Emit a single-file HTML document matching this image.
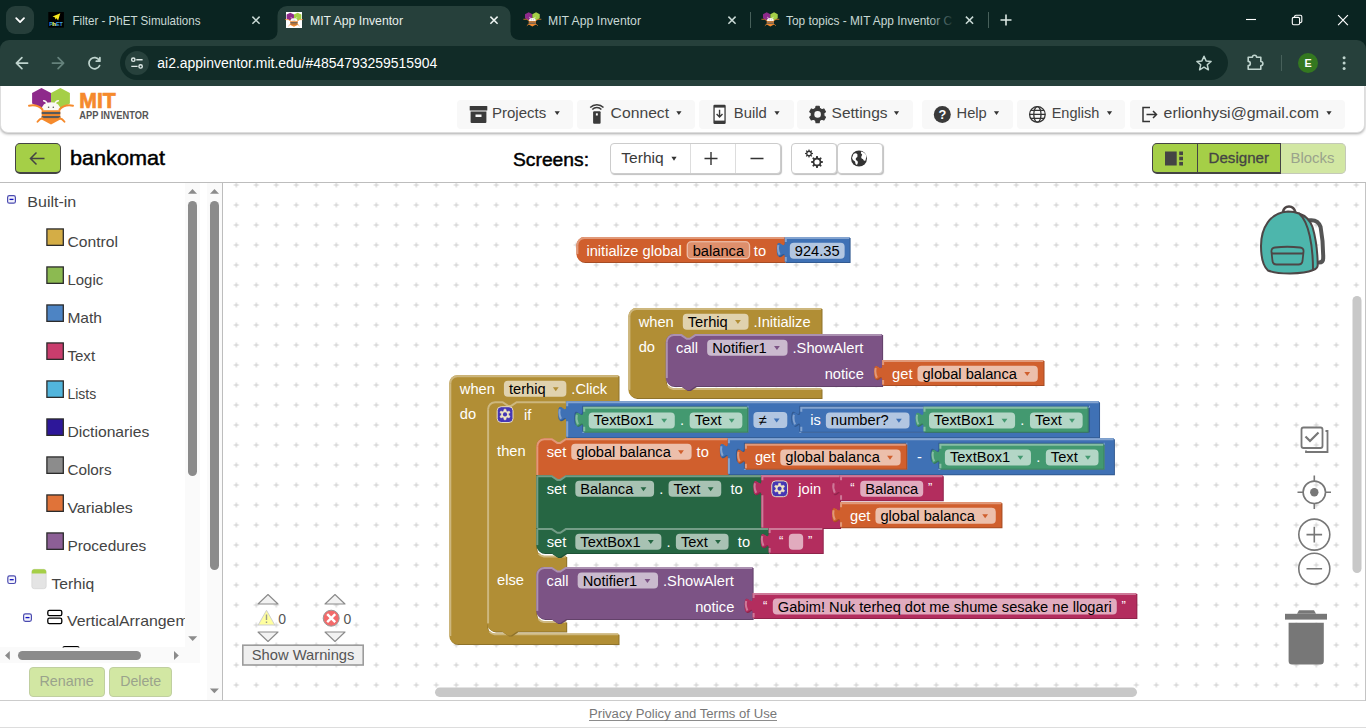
<!DOCTYPE html>
<html><head><meta charset="utf-8"><title>MIT App Inventor</title>
<style>
html,body{margin:0;padding:0;}
body{width:1366px;height:728px;overflow:hidden;position:relative;background:#fff;font-family:"Liberation Sans",sans-serif;}
#boxes div{position:absolute;}
svg{position:absolute;left:0;top:0;}
svg text{font-family:"Liberation Sans",sans-serif;white-space:pre;}
#ws text{font-size:14.667px;}
</style></head><body>
<div id="boxes">
<div style="left:0px;top:0px;width:1366px;height:60px;background:#0a2421"></div>
<div style="left:0px;top:40px;width:1366px;height:46.5px;background:#26403b;border-radius:9px 9px 0 0"></div>
<div style="left:6px;top:6px;width:28px;height:28px;background:#263e3a;border-radius:9px"></div>
<div style="left:750px;top:12px;width:1px;height:16px;background:#47605a"></div>
<div style="left:988px;top:12px;width:1px;height:16px;background:#47605a"></div>
<div style="left:120px;top:46px;width:1108px;height:33.8px;background:#112b27;border-radius:17px"></div>
<div style="left:124.8px;top:51px;width:24.2px;height:24.2px;background:#27413c;border-radius:13px"></div>
<div style="left:1280.5px;top:55px;width:1px;height:16px;background:#47605a"></div>
<div style="left:1298.4px;top:53.4px;width:19.4px;height:19.4px;background:#347820;border-radius:10px"></div>
<div style="left:0px;top:86px;width:1366px;height:642px;background:#fff"></div>
<div style="left:0px;top:80px;width:1365.3px;height:53.3px;background:#fff;border-radius:0 0 8px 8px;box-shadow:0 1px 3px rgba(0,0,0,.35);border:1px solid #ddd;box-sizing:border-box;clip-path:inset(6.5px -5px -6px -5px)"></div>
<div style="left:457px;top:100px;width:116px;height:28.7px;background:#f8f8f8;border-radius:4px"></div>
<div style="left:577px;top:100px;width:118px;height:28.7px;background:#f8f8f8;border-radius:4px"></div>
<div style="left:698.5px;top:100px;width:95px;height:28.7px;background:#f8f8f8;border-radius:4px"></div>
<div style="left:797px;top:100px;width:116px;height:28.7px;background:#f8f8f8;border-radius:4px"></div>
<div style="left:922px;top:100px;width:91px;height:28.7px;background:#f8f8f8;border-radius:4px"></div>
<div style="left:1017px;top:100px;width:108px;height:28.7px;background:#f8f8f8;border-radius:4px"></div>
<div style="left:1130px;top:100px;width:215px;height:28.7px;background:#f8f8f8;border-radius:4px"></div>
<div style="left:15px;top:143px;width:46px;height:31px;background:#a5cf47;border:1px solid #444;border-bottom-width:2px;border-right-width:1.5px;border-radius:5px;box-sizing:border-box"></div>
<div style="left:610px;top:143px;width:171px;height:31px;background:#fff;border:1px solid #ccc;border-radius:4px;box-sizing:border-box;box-shadow:1px 1px 1px rgba(0,0,0,.25)"></div>
<div style="left:690px;top:144px;width:1px;height:29px;background:#ddd"></div>
<div style="left:735px;top:144px;width:1px;height:29px;background:#ddd"></div>
<div style="left:791px;top:143px;width:46px;height:31px;background:#fff;border:1px solid #ccc;border-radius:4px;box-sizing:border-box;box-shadow:1px 1px 1px rgba(0,0,0,.25)"></div>
<div style="left:837px;top:143px;width:46px;height:31px;background:#fff;border:1px solid #ccc;border-radius:4px;box-sizing:border-box;box-shadow:1px 1px 1px rgba(0,0,0,.25)"></div>
<div style="left:1152px;top:143px;width:129px;height:31px;background:#a5cf47;border:1px solid #444;border-bottom-width:2px;border-radius:5px 0 0 5px;box-sizing:border-box"></div>
<div style="left:1197px;top:143px;width:1px;height:31px;background:#444"></div>
<div style="left:1280px;top:143px;width:66px;height:31px;background:#d2e7a3;border:1px solid #c4c9b8;border-left:none;border-radius:0 5px 5px 0;box-sizing:border-box"></div>
<div style="left:1280px;top:143px;width:1px;height:31px;background:#444"></div>
<div style="left:0px;top:182px;width:1366px;height:1px;background:#bdbdbd"></div>
<div style="left:222px;top:183px;width:1px;height:518px;background:#bdbdbd"></div>
<div style="left:0px;top:700px;width:1366px;height:1px;background:#ccc"></div>
<div style="left:1364.6px;top:183px;width:1px;height:518px;background:#c4c4c4"></div>
<div style="left:0px;top:727px;width:1366px;height:1px;background:#ddd"></div>
<div style="left:185px;top:183px;width:15px;height:464px;background:#fafafa"></div>
<div style="left:207px;top:183px;width:15px;height:517px;background:#fafafa"></div>
<div style="left:0px;top:647px;width:200px;height:16px;background:#fafafa"></div>
<div style="left:188px;top:201px;width:9px;height:275px;background:#8b8b8b;border-radius:4.5px"></div>
<div style="left:210px;top:201px;width:9px;height:368.5px;background:#8b8b8b;border-radius:4.5px"></div>
<div style="left:18px;top:651px;width:123px;height:9px;background:#8b8b8b;border-radius:4.5px"></div>
<div style="left:28.5px;top:667px;width:76.5px;height:30px;background:#d2e7a3;border:1px solid #c0cfa0;border-radius:4px;box-sizing:border-box"></div>
<div style="left:109px;top:667px;width:63px;height:30px;background:#d2e7a3;border:1px solid #c0cfa0;border-radius:4px;box-sizing:border-box"></div>
<div style="left:589px;top:719.6px;width:188px;height:1px;background:#8c8c8c"></div>
</div>
<svg id="ws" width="1366" height="728" viewBox="0 0 1366 728">
<defs>
<pattern id="grid" x="6.3" y="-5" width="20" height="20" patternUnits="userSpaceOnUse"><path d="M7.5,10 h5 M10,7.500 v5" stroke="#ccc" stroke-width="1"/></pattern>
<clipPath id="wsclip"><rect x="223" y="183" width="1141" height="517"/></clipPath>
</defs>
<g clip-path="url(#wsclip)">
<rect x="223" y="183" width="1141" height="517" fill="url(#grid)"/>
<g id="blocks">
<path d="M 576.4,245.1 a 8,8 0 0,1 8,-8 H 784.8 v 5 c 0,10 -8,-8 -8,7.5 s 8,-2.5 8,7.5 V 262.1 H 584.4 a 8,8 0 0,1 -8,-8 z" fill="#a64c24" transform="translate(1,1)"/>
<path d="M 576.4,245.1 a 8,8 0 0,1 8,-8 H 784.8 v 5 c 0,10 -8,-8 -8,7.5 s 8,-2.5 8,7.5 V 262.1 H 584.4 a 8,8 0 0,1 -8,-8 z" fill="#D05F2D"/>
<path d="M 577.4,245.1 a 7,7 0 0,1 7,-7 H 784.3" fill="none" stroke="#e19979" stroke-width="2"/>
<path d="M 577.4,245.1 V 254.1" fill="none" stroke="#e19979" stroke-width="2"/>
<text x="586.4" y="255.75" fill="#fff">initialize global</text>
<rect x="687.22" y="241.7" width="62.34" height="17" rx="4" ry="4" fill="#fff" fill-opacity="0.3" stroke="#fff" stroke-opacity="0.5" stroke-width="1.3"/>
<text x="692.72" y="255.75" fill="#000">balanca</text>
<text x="753.86" y="255.75" fill="#fff">to</text>
<path d="M 784.8,237.1 H 849.6 V 262.1 H 784.8 V 257.1 c 0,-10 -8,8 -8,-7.5 s 8,2.5 8,-7.5 z" fill="#325a91" transform="translate(1,1)"/>
<path d="M 784.8,237.1 H 849.6 V 262.1 H 784.8 V 257.1 c 0,-10 -8,8 -8,-7.5 s 8,2.5 8,-7.5 z" fill="#3F71B5"/>
<path d="M 785.8,261.6 V 257.1 m -7.4,-12 q -1.2,4.8 1.2,9.6 M 785.8,242.1 V 238.1 H 849.1" fill="none" stroke="#84a4d0" stroke-width="2"/>
<rect x="789.8" y="242.7" width="54.83" height="16" rx="4" ry="4" fill="#fff" fill-opacity="0.6"/>
<text x="794.8" y="255.75" fill="#000">924.35</text>
<path d="M 628.4,316.1 a 8,8 0 0,1 8,-8 H 821.5 V 334.1 H 695.8 l -6,4 -3,0 -6,-4 h -7 a 8,8 0 0,0 -8,8 V 380.4 a 8,8 0 0,0 8,8 H 821.5 V 397.9 H 636.4 a 8,8 0 0,1 -8,-8 z" fill="#8e722a" transform="translate(1,1)"/>
<path d="M 628.4,316.1 a 8,8 0 0,1 8,-8 H 821.5 V 334.1 H 695.8 l -6,4 -3,0 -6,-4 h -7 a 8,8 0 0,0 -8,8 V 380.4 a 8,8 0 0,0 8,8 H 821.5 V 397.9 H 636.4 a 8,8 0 0,1 -8,-8 z" fill="#B18E35"/>
<path d="M 629.4,316.1 a 7,7 0 0,1 7,-7 H 821" fill="none" stroke="#cdb77e" stroke-width="2"/>
<path d="M 629.4,316.1 V 389.9" fill="none" stroke="#cdb77e" stroke-width="2"/>
<path d="M 668.1,386.1 a 7.5,7.5 0 0,0 5.2,2.8 H 821" fill="none" stroke="#cdb77e" stroke-width="2"/>
<text x="638.7" y="326.75" fill="#fff">when </text>
<rect x="682.81" y="313.7" width="65.72" height="16" rx="4" ry="4" fill="#fff" fill-opacity="0.6"/>
<text x="687.81" y="326.75" fill="#000">Terhiq</text>
<path d="M735.03,320.1 h5.8 l-2.9,4 z" fill="#B18E35"/>
<text x="753.53" y="326.75" fill="#fff">.Initialize</text>
<text x="638.7" y="352.35" fill="#fff">do</text>
<path d="M 665.8,342.1 a 8,8 0 0,1 8,-8 H 680.8 l 6,4 3,0 6,-4 H 882.11 V 365.1 c 0,10 -8,-8 -8,7.5 s 8,-2.5 8,7.5 V 386.1 H 695.8 l -6,4 -3,0 -6,-4 H 673.8 a 8,8 0 0,1 -8,-8 z" fill="#63426a" transform="translate(1,1)"/>
<path d="M 665.8,342.1 a 8,8 0 0,1 8,-8 H 680.8 l 6,4 3,0 6,-4 H 882.11 V 365.1 c 0,10 -8,-8 -8,7.5 s 8,-2.5 8,7.5 V 386.1 H 695.8 l -6,4 -3,0 -6,-4 H 673.8 a 8,8 0 0,1 -8,-8 z" fill="#7C5385"/>
<path d="M 666.8,342.1 a 7,7 0 0,1 7,-7 H 681.3 l 5.5,3.7 3,0 5.5,-3.7 H 881.61" fill="none" stroke="#ab91b1" stroke-width="2"/>
<path d="M 666.8,342.1 V 378.1" fill="none" stroke="#ab91b1" stroke-width="2"/>
<text x="676.1" y="352.75" fill="#fff">call </text>
<rect x="707.16" y="339.7" width="80.37" height="16" rx="4" ry="4" fill="#fff" fill-opacity="0.6"/>
<text x="712.16" y="352.75" fill="#000">Notifier1</text>
<path d="M774.04,346.1 h5.8 l-2.9,4 z" fill="#7C5385"/>
<text x="792.54" y="352.75" fill="#fff">.ShowAlert</text>
<text x="824.7" y="378.75" fill="#fff">notice</text>
<path d="M 882.11,360.1 H 1043.51 V 385.1 H 882.11 V 380.1 c 0,-10 -8,8 -8,-7.5 s 8,2.5 8,-7.5 z" fill="#a64c24" transform="translate(1,1)"/>
<path d="M 882.11,360.1 H 1043.51 V 385.1 H 882.11 V 380.1 c 0,-10 -8,8 -8,-7.5 s 8,2.5 8,-7.5 z" fill="#D05F2D"/>
<path d="M 883.11,384.6 V 380.1 m -7.4,-12 q -1.2,4.8 1.2,9.6 M 883.11,365.1 V 361.1 H 1043.01" fill="none" stroke="#e19979" stroke-width="2"/>
<text x="892.11" y="378.75" fill="#fff">get</text>
<rect x="917.48" y="365.7" width="120.33" height="16" rx="4" ry="4" fill="#fff" fill-opacity="0.6"/>
<text x="922.48" y="378.75" fill="#000">global balanca</text>
<path d="M1024.31,372.1 h5.8 l-2.9,4 z" fill="#D05F2D"/>
<path d="M 449.3,383.2 a 8,8 0 0,1 8,-8 H 618.5 V 401.2 H 517.1 l -6,4 -3,0 -6,-4 h -7 a 8,8 0 0,0 -8,8 V 625.8 a 8,8 0 0,0 8,8 H 618.5 V 644 H 457.3 a 8,8 0 0,1 -8,-8 z" fill="#8e722a" transform="translate(1,1)"/>
<path d="M 449.3,383.2 a 8,8 0 0,1 8,-8 H 618.5 V 401.2 H 517.1 l -6,4 -3,0 -6,-4 h -7 a 8,8 0 0,0 -8,8 V 625.8 a 8,8 0 0,0 8,8 H 618.5 V 644 H 457.3 a 8,8 0 0,1 -8,-8 z" fill="#B18E35"/>
<path d="M 450.3,383.2 a 7,7 0 0,1 7,-7 H 618" fill="none" stroke="#cdb77e" stroke-width="2"/>
<path d="M 450.3,383.2 V 636" fill="none" stroke="#cdb77e" stroke-width="2"/>
<path d="M 489.4,631.5 a 7.5,7.5 0 0,0 5.2,2.8 H 618" fill="none" stroke="#cdb77e" stroke-width="2"/>
<text x="459.8" y="393.85" fill="#fff">when </text>
<rect x="503.91" y="380.8" width="62.46" height="16" rx="4" ry="4" fill="#fff" fill-opacity="0.6"/>
<text x="508.91" y="393.85" fill="#000">terhiq</text>
<path d="M552.87,387.2 h5.8 l-2.9,4 z" fill="#B18E35"/>
<text x="571.37" y="393.85" fill="#fff">.Click</text>
<text x="459.8" y="419.45" fill="#fff">do</text>
<path d="M 487.1,409.2 a 8,8 0 0,1 8,-8 H 502.1 l 6,4 3,0 6,-4 H 566.2 v 5 c 0,10 -8,-8 -8,7.5 s 8,-2.5 8,7.5 V 438.2 H 566.3 l -6,4 -3,0 -6,-4 h -7 a 8,8 0 0,0 -8,8 V 547.9 a 8,8 0 0,0 8,8 H 566.2 V 566.9 H 566.3 l -6,4 -3,0 -6,-4 h -7 a 8,8 0 0,0 -8,8 V 613.5 a 8,8 0 0,0 8,8 H 566.2 V 631.4 H 517.1 l -6,4 -3,0 -6,-4 H 495.1 a 8,8 0 0,1 -8,-8 z" fill="#8e722a" transform="translate(1,1)"/>
<path d="M 487.1,409.2 a 8,8 0 0,1 8,-8 H 502.1 l 6,4 3,0 6,-4 H 566.2 v 5 c 0,10 -8,-8 -8,7.5 s 8,-2.5 8,7.5 V 438.2 H 566.3 l -6,4 -3,0 -6,-4 h -7 a 8,8 0 0,0 -8,8 V 547.9 a 8,8 0 0,0 8,8 H 566.2 V 566.9 H 566.3 l -6,4 -3,0 -6,-4 h -7 a 8,8 0 0,0 -8,8 V 613.5 a 8,8 0 0,0 8,8 H 566.2 V 631.4 H 517.1 l -6,4 -3,0 -6,-4 H 495.1 a 8,8 0 0,1 -8,-8 z" fill="#B18E35"/>
<path d="M 488.1,409.2 a 7,7 0 0,1 7,-7 H 502.6 l 5.5,3.7 3,0 5.5,-3.7 H 565.7" fill="none" stroke="#cdb77e" stroke-width="2"/>
<path d="M 488.1,409.2 V 623.4" fill="none" stroke="#cdb77e" stroke-width="2"/>
<path d="M 538.6,553.6 a 7.5,7.5 0 0,0 5.2,2.8 H 565.7" fill="none" stroke="#cdb77e" stroke-width="2"/>
<path d="M 538.6,619.2 a 7.5,7.5 0 0,0 5.2,2.8 H 565.7" fill="none" stroke="#cdb77e" stroke-width="2"/>
<g transform="translate(496.7,406.2)"><rect x="0.5" y="0.5" width="15.8" height="15.8" rx="4" ry="4" fill="#4637b4" stroke="#e9dfc0" stroke-width="1"/><path fill="#f1e7c4" stroke="#f1e7c4" stroke-width="0.5" stroke-linejoin="round" d="M7.03,4.88 L7.39,2.93 L9.21,2.93 L9.57,4.88 L10.58,5.47 L12.45,4.80 L13.37,6.38 L11.85,7.66 L11.85,8.84 L13.37,10.12 L12.45,11.70 L10.58,11.03 L9.57,11.62 L9.21,13.57 L7.39,13.57 L7.03,11.62 L6.02,11.03 L4.15,11.70 L3.23,10.12 L4.75,8.84 L4.75,7.66 L3.23,6.38 L4.15,4.80 L6.02,5.47z"/><circle cx="8.3" cy="8.25" r="2.1" fill="#4637b4"/></g>
<text x="524.1" y="419.65" fill="#fff">if</text>
<text x="497.1" y="456.25" fill="#fff">then</text>
<text x="497.1" y="584.95" fill="#fff">else</text>
<path d="M 566.2,401.2 H 1099.04 V 437.2 H 566.2 V 421.2 c 0,-10 -8,8 -8,-7.5 s 8,2.5 8,-7.5 z" fill="#325a91" transform="translate(1,1)"/>
<path d="M 566.2,401.2 H 1099.04 V 437.2 H 566.2 V 421.2 c 0,-10 -8,8 -8,-7.5 s 8,2.5 8,-7.5 z" fill="#3F71B5"/>
<path d="M 567.2,436.7 V 421.2 m -7.4,-12 q -1.2,4.8 1.2,9.6 M 567.2,406.2 V 402.2 H 1098.54" fill="none" stroke="#84a4d0" stroke-width="2"/>
<path d="M 582.2,405.8 H 747.44 V 431.8 H 582.2 V 425.8 c 0,-10 -8,8 -8,-7.5 s 8,2.5 8,-7.5 z" fill="#325a91"/>
<path d="M 582.2,432.3 H 747.94 V 405.8" fill="none" stroke="#84a4d0" stroke-width="1"/>
<path d="M 583.2,406.8 H 747.44 V 431.8 H 583.2 V 426.8 c 0,-10 -8,8 -8,-7.5 s 8,2.5 8,-7.5 z" fill="#367a5a" transform="translate(1,1)"/>
<path d="M 583.2,406.8 H 747.44 V 431.8 H 583.2 V 426.8 c 0,-10 -8,8 -8,-7.5 s 8,2.5 8,-7.5 z" fill="#439970"/>
<path d="M 584.2,431.3 V 426.8 m -7.4,-12 q -1.2,4.8 1.2,9.6 M 584.2,411.8 V 407.8 H 746.94" fill="none" stroke="#87bea3" stroke-width="2"/>
<rect x="588.7" y="412.4" width="86.08" height="16" rx="4" ry="4" fill="#fff" fill-opacity="0.6"/>
<text x="593.7" y="425.45" fill="#000">TextBox1</text>
<path d="M661.28,418.8 h5.8 l-2.9,4 z" fill="#439970"/>
<text x="679.98" y="425.45" fill="#fff">.</text>
<rect x="689.66" y="412.4" width="52.68" height="16" rx="4" ry="4" fill="#fff" fill-opacity="0.6"/>
<text x="694.66" y="425.45" fill="#000">Text</text>
<path d="M728.84,418.8 h5.8 l-2.9,4 z" fill="#439970"/>
<rect x="753.44" y="412" width="33.84" height="16" rx="4" ry="4" fill="#fff" fill-opacity="0.6"/>
<text x="758.44" y="425.05" fill="#000">≠</text>
<path d="M773.78,418.4 h5.8 l-2.9,4 z" fill="#3F71B5"/>
<path d="M 799.28,405.8 H 1089.04 V 431.8 H 799.28 V 425.8 c 0,-10 -8,8 -8,-7.5 s 8,2.5 8,-7.5 z" fill="#325a91"/>
<path d="M 799.28,432.3 H 1089.54 V 405.8" fill="none" stroke="#84a4d0" stroke-width="1"/>
<path d="M 800.28,406.8 H 1089.04 V 431.8 H 800.28 V 426.8 c 0,-10 -8,8 -8,-7.5 s 8,2.5 8,-7.5 z" fill="#325a91" transform="translate(1,1)"/>
<path d="M 800.28,406.8 H 1089.04 V 431.8 H 800.28 V 426.8 c 0,-10 -8,8 -8,-7.5 s 8,2.5 8,-7.5 z" fill="#3F71B5"/>
<path d="M 801.28,431.3 V 426.8 m -7.4,-12 q -1.2,4.8 1.2,9.6 M 801.28,411.8 V 407.8 H 1088.54" fill="none" stroke="#84a4d0" stroke-width="2"/>
<text x="810.28" y="425.45" fill="#fff">is</text>
<rect x="825.86" y="412.4" width="83.64" height="16" rx="4" ry="4" fill="#fff" fill-opacity="0.6"/>
<text x="830.86" y="425.45" fill="#000">number?</text>
<path d="M896.01,418.8 h5.8 l-2.9,4 z" fill="#3F71B5"/>
<path d="M 923.51,406.8 H 1087.74 V 431.8 H 923.51 V 426.8 c 0,-10 -8,8 -8,-7.5 s 8,2.5 8,-7.5 z" fill="#367a5a" transform="translate(1,1)"/>
<path d="M 923.51,406.8 H 1087.74 V 431.8 H 923.51 V 426.8 c 0,-10 -8,8 -8,-7.5 s 8,2.5 8,-7.5 z" fill="#439970"/>
<path d="M 924.51,431.3 V 426.8 m -7.4,-12 q -1.2,4.8 1.2,9.6 M 924.51,411.8 V 407.8 H 1087.24" fill="none" stroke="#87bea3" stroke-width="2"/>
<rect x="929.01" y="412.4" width="86.08" height="16" rx="4" ry="4" fill="#fff" fill-opacity="0.6"/>
<text x="934.01" y="425.45" fill="#000">TextBox1</text>
<path d="M1001.59,418.8 h5.8 l-2.9,4 z" fill="#439970"/>
<text x="1020.29" y="425.45" fill="#fff">.</text>
<rect x="1029.97" y="412.4" width="52.68" height="16" rx="4" ry="4" fill="#fff" fill-opacity="0.6"/>
<text x="1034.97" y="425.45" fill="#000">Text</text>
<path d="M1069.14,418.8 h5.8 l-2.9,4 z" fill="#439970"/>
<path d="M 536.3,446.2 a 8,8 0 0,1 8,-8 H 551.3 l 6,4 3,0 6,-4 H 727.9 V 443.2 c 0,10 -8,-8 -8,7.5 s 8,-2.5 8,7.5 V 475.2 H 566.3 l -6,4 -3,0 -6,-4 H 536.3 z" fill="#a64c24" transform="translate(1,1)"/>
<path d="M 536.3,446.2 a 8,8 0 0,1 8,-8 H 551.3 l 6,4 3,0 6,-4 H 727.9 V 443.2 c 0,10 -8,-8 -8,7.5 s 8,-2.5 8,7.5 V 475.2 H 566.3 l -6,4 -3,0 -6,-4 H 536.3 z" fill="#D05F2D"/>
<path d="M 537.3,446.2 a 7,7 0 0,1 7,-7 H 551.8 l 5.5,3.7 3,0 5.5,-3.7 H 727.4" fill="none" stroke="#e19979" stroke-width="2"/>
<path d="M 537.3,446.2 V 475.2" fill="none" stroke="#e19979" stroke-width="2"/>
<text x="546.7" y="456.85" fill="#fff">set</text>
<rect x="571.25" y="443.8" width="120.33" height="16" rx="4" ry="4" fill="#fff" fill-opacity="0.6"/>
<text x="576.25" y="456.85" fill="#000">global balanca</text>
<path d="M678.08,450.2 h5.8 l-2.9,4 z" fill="#D05F2D"/>
<text x="696.58" y="456.85" fill="#fff">to</text>
<path d="M 727.9,438.2 H 1113.92 V 474.2 H 727.9 V 458.2 c 0,-10 -8,8 -8,-7.5 s 8,2.5 8,-7.5 z" fill="#325a91" transform="translate(1,1)"/>
<path d="M 727.9,438.2 H 1113.92 V 474.2 H 727.9 V 458.2 c 0,-10 -8,8 -8,-7.5 s 8,2.5 8,-7.5 z" fill="#3F71B5"/>
<path d="M 728.9,473.7 V 458.2 m -7.4,-12 q -1.2,4.8 1.2,9.6 M 728.9,443.2 V 439.2 H 1113.42" fill="none" stroke="#84a4d0" stroke-width="2"/>
<path d="M 743.9,442.8 H 906.31 V 468.8 H 743.9 V 462.8 c 0,-10 -8,8 -8,-7.5 s 8,2.5 8,-7.5 z" fill="#325a91"/>
<path d="M 743.9,469.3 H 906.81 V 442.8" fill="none" stroke="#84a4d0" stroke-width="1"/>
<path d="M 744.9,443.8 H 906.31 V 468.8 H 744.9 V 463.8 c 0,-10 -8,8 -8,-7.5 s 8,2.5 8,-7.5 z" fill="#a64c24" transform="translate(1,1)"/>
<path d="M 744.9,443.8 H 906.31 V 468.8 H 744.9 V 463.8 c 0,-10 -8,8 -8,-7.5 s 8,2.5 8,-7.5 z" fill="#D05F2D"/>
<path d="M 745.9,468.3 V 463.8 m -7.4,-12 q -1.2,4.8 1.2,9.6 M 745.9,448.8 V 444.8 H 905.81" fill="none" stroke="#e19979" stroke-width="2"/>
<text x="754.9" y="462.45" fill="#fff">get</text>
<rect x="780.28" y="449.4" width="120.33" height="16" rx="4" ry="4" fill="#fff" fill-opacity="0.6"/>
<text x="785.28" y="462.45" fill="#000">global balanca</text>
<path d="M887.11,455.8 h5.8 l-2.9,4 z" fill="#D05F2D"/>
<text x="917.11" y="462.05" fill="#fff">-</text>
<path d="M 938.39,442.8 H 1103.62 V 468.8 H 938.39 V 462.8 c 0,-10 -8,8 -8,-7.5 s 8,2.5 8,-7.5 z" fill="#325a91"/>
<path d="M 938.39,469.3 H 1104.12 V 442.8" fill="none" stroke="#84a4d0" stroke-width="1"/>
<path d="M 939.39,443.8 H 1103.62 V 468.8 H 939.39 V 463.8 c 0,-10 -8,8 -8,-7.5 s 8,2.5 8,-7.5 z" fill="#367a5a" transform="translate(1,1)"/>
<path d="M 939.39,443.8 H 1103.62 V 468.8 H 939.39 V 463.8 c 0,-10 -8,8 -8,-7.5 s 8,2.5 8,-7.5 z" fill="#439970"/>
<path d="M 940.39,468.3 V 463.8 m -7.4,-12 q -1.2,4.8 1.2,9.6 M 940.39,448.8 V 444.8 H 1103.12" fill="none" stroke="#87bea3" stroke-width="2"/>
<rect x="944.89" y="449.4" width="86.08" height="16" rx="4" ry="4" fill="#fff" fill-opacity="0.6"/>
<text x="949.89" y="462.45" fill="#000">TextBox1</text>
<path d="M1017.47,455.8 h5.8 l-2.9,4 z" fill="#439970"/>
<text x="1036.17" y="462.45" fill="#fff">.</text>
<rect x="1045.84" y="449.4" width="52.68" height="16" rx="4" ry="4" fill="#fff" fill-opacity="0.6"/>
<text x="1050.84" y="462.45" fill="#000">Text</text>
<path d="M1085.02,455.8 h5.8 l-2.9,4 z" fill="#439970"/>
<path d="M 536.3,475.2 H 551.3 l 6,4 3,0 6,-4 H 761.36 V 480.2 c 0,10 -8,-8 -8,7.5 s 8,-2.5 8,7.5 V 528.1 H 566.3 l -6,4 -3,0 -6,-4 H 536.3 z" fill="#1e5236" transform="translate(1,1)"/>
<path d="M 536.3,475.2 H 551.3 l 6,4 3,0 6,-4 H 761.36 V 480.2 c 0,10 -8,-8 -8,7.5 s 8,-2.5 8,7.5 V 528.1 H 566.3 l -6,4 -3,0 -6,-4 H 536.3 z" fill="#266643"/>
<path d="M 537.3,476.2 H 551.8 l 5.5,3.7 3,0 5.5,-3.7 H 760.86" fill="none" stroke="#749d87" stroke-width="2"/>
<path d="M 537.3,475.9 V 528.1" fill="none" stroke="#749d87" stroke-width="2"/>
<text x="546.7" y="493.85" fill="#fff">set </text>
<rect x="575.32" y="480.8" width="78.76" height="16" rx="4" ry="4" fill="#fff" fill-opacity="0.6"/>
<text x="580.32" y="493.85" fill="#000">Balanca</text>
<path d="M640.59,487.2 h5.8 l-2.9,4 z" fill="#266643"/>
<text x="659.29" y="493.85" fill="#fff">.</text>
<rect x="668.56" y="480.8" width="52.68" height="16" rx="4" ry="4" fill="#fff" fill-opacity="0.6"/>
<text x="673.56" y="493.85" fill="#000">Text</text>
<path d="M707.74,487.2 h5.8 l-2.9,4 z" fill="#266643"/>
<text x="730.54" y="493.85" fill="#fff">to</text>
<path d="M 761.36,475.2 H 840.06 v 5 c 0,10 -8,-8 -8,7.5 s 8,-2.5 8,7.5 V 507.2 c 0,10 -8,-8 -8,7.5 s 8,-2.5 8,7.5 V 528.1 H 761.36 V 495.2 c 0,-10 -8,8 -8,-7.5 s 8,2.5 8,-7.5 z" fill="#8f244b" transform="translate(1,1)"/>
<path d="M 761.36,475.2 H 840.06 v 5 c 0,10 -8,-8 -8,7.5 s 8,-2.5 8,7.5 V 507.2 c 0,10 -8,-8 -8,7.5 s 8,-2.5 8,7.5 V 528.1 H 761.36 V 495.2 c 0,-10 -8,8 -8,-7.5 s 8,2.5 8,-7.5 z" fill="#B32D5E"/>
<path d="M 762.36,527.6 V 495.2 m -7.4,-12 q -1.2,4.8 1.2,9.6 M 762.36,480.2 V 476.2 H 839.56" fill="none" stroke="#ce7998" stroke-width="2"/>
<g transform="translate(771.26,480.4)"><rect x="0.5" y="0.5" width="15.8" height="15.8" rx="4" ry="4" fill="#4637b4" stroke="#e9dfc0" stroke-width="1"/><path fill="#f1e7c4" stroke="#f1e7c4" stroke-width="0.5" stroke-linejoin="round" d="M7.03,4.88 L7.39,2.93 L9.21,2.93 L9.57,4.88 L10.58,5.47 L12.45,4.80 L13.37,6.38 L11.85,7.66 L11.85,8.84 L13.37,10.12 L12.45,11.70 L10.58,11.03 L9.57,11.62 L9.21,13.57 L7.39,13.57 L7.03,11.62 L6.02,11.03 L4.15,11.70 L3.23,10.12 L4.75,8.84 L4.75,7.66 L3.23,6.38 L4.15,4.80 L6.02,5.47z"/><circle cx="8.3" cy="8.25" r="2.1" fill="#4637b4"/></g>
<text x="798.36" y="493.85" fill="#fff">join</text>
<path d="M 840.06,475.2 H 942.79 V 500.2 H 840.06 V 495.2 c 0,-10 -8,8 -8,-7.5 s 8,2.5 8,-7.5 z" fill="#8f244b" transform="translate(1,1)"/>
<path d="M 840.06,475.2 H 942.79 V 500.2 H 840.06 V 495.2 c 0,-10 -8,8 -8,-7.5 s 8,2.5 8,-7.5 z" fill="#B32D5E"/>
<path d="M 841.06,499.7 V 495.2 m -7.4,-12 q -1.2,4.8 1.2,9.6 M 841.06,480.2 V 476.2 H 942.29" fill="none" stroke="#ce7998" stroke-width="2"/>
<text x="850.36" y="491.9" fill="#fff" style="font-size:13px">“</text>
<rect x="860.24" y="480.8" width="62.96" height="16" rx="4" ry="4" fill="#fff" fill-opacity="0.6"/>
<text x="865.24" y="493.85" fill="#000">Balanca</text>
<text x="928.01" y="491.9" fill="#fff" style="font-size:13px">”</text>
<path d="M 840.06,502.2 H 1001.46 V 527.2 H 840.06 V 522.2 c 0,-10 -8,8 -8,-7.5 s 8,2.5 8,-7.5 z" fill="#a64c24" transform="translate(1,1)"/>
<path d="M 840.06,502.2 H 1001.46 V 527.2 H 840.06 V 522.2 c 0,-10 -8,8 -8,-7.5 s 8,2.5 8,-7.5 z" fill="#D05F2D"/>
<path d="M 841.06,526.7 V 522.2 m -7.4,-12 q -1.2,4.8 1.2,9.6 M 841.06,507.2 V 503.2 H 1000.96" fill="none" stroke="#e19979" stroke-width="2"/>
<text x="850.06" y="520.85" fill="#fff">get</text>
<rect x="875.44" y="507.8" width="120.33" height="16" rx="4" ry="4" fill="#fff" fill-opacity="0.6"/>
<text x="880.44" y="520.85" fill="#000">global balanca</text>
<path d="M982.26,514.2 h5.8 l-2.9,4 z" fill="#D05F2D"/>
<path d="M 536.3,528.1 H 551.3 l 6,4 3,0 6,-4 H 768.68 V 533.1 c 0,10 -8,-8 -8,7.5 s 8,-2.5 8,7.5 V 553.1 H 566.3 l -6,4 -3,0 -6,-4 H 544.3 a 8,8 0 0,1 -8,-8 z" fill="#1e5236" transform="translate(1,1)"/>
<path d="M 536.3,528.1 H 551.3 l 6,4 3,0 6,-4 H 768.68 V 533.1 c 0,10 -8,-8 -8,7.5 s 8,-2.5 8,7.5 V 553.1 H 566.3 l -6,4 -3,0 -6,-4 H 544.3 a 8,8 0 0,1 -8,-8 z" fill="#266643"/>
<path d="M 537.3,529.1 H 551.8 l 5.5,3.7 3,0 5.5,-3.7 H 768.18" fill="none" stroke="#749d87" stroke-width="2"/>
<path d="M 537.3,528.8 V 545.1" fill="none" stroke="#749d87" stroke-width="2"/>
<text x="546.7" y="546.75" fill="#fff">set </text>
<rect x="575.32" y="533.7" width="86.08" height="16" rx="4" ry="4" fill="#fff" fill-opacity="0.6"/>
<text x="580.32" y="546.75" fill="#000">TextBox1</text>
<path d="M647.91,540.1 h5.8 l-2.9,4 z" fill="#266643"/>
<text x="666.61" y="546.75" fill="#fff">.</text>
<rect x="675.88" y="533.7" width="52.68" height="16" rx="4" ry="4" fill="#fff" fill-opacity="0.6"/>
<text x="680.88" y="546.75" fill="#000">Text</text>
<path d="M715.06,540.1 h5.8 l-2.9,4 z" fill="#266643"/>
<text x="737.86" y="546.75" fill="#fff">to</text>
<path d="M 768.68,528.1 H 822.74 V 553.1 H 768.68 V 548.1 c 0,-10 -8,8 -8,-7.5 s 8,2.5 8,-7.5 z" fill="#8f244b" transform="translate(1,1)"/>
<path d="M 768.68,528.1 H 822.74 V 553.1 H 768.68 V 548.1 c 0,-10 -8,8 -8,-7.5 s 8,2.5 8,-7.5 z" fill="#B32D5E"/>
<path d="M 769.68,552.6 V 548.1 m -7.4,-12 q -1.2,4.8 1.2,9.6 M 769.68,533.1 V 529.1 H 822.24" fill="none" stroke="#ce7998" stroke-width="2"/>
<text x="778.98" y="544.8" fill="#fff" style="font-size:13px">“</text>
<rect x="788.86" y="533.7" width="14.3" height="16" rx="4" ry="4" fill="#fff" fill-opacity="0.6"/>
<text x="793.86" y="546.75" fill="#000"></text>
<text x="807.96" y="544.8" fill="#fff" style="font-size:13px">”</text>
<path d="M 536.3,574.9 a 8,8 0 0,1 8,-8 H 551.3 l 6,4 3,0 6,-4 H 752.61 V 597.9 c 0,10 -8,-8 -8,7.5 s 8,-2.5 8,7.5 V 618.9 H 566.3 l -6,4 -3,0 -6,-4 H 544.3 a 8,8 0 0,1 -8,-8 z" fill="#63426a" transform="translate(1,1)"/>
<path d="M 536.3,574.9 a 8,8 0 0,1 8,-8 H 551.3 l 6,4 3,0 6,-4 H 752.61 V 597.9 c 0,10 -8,-8 -8,7.5 s 8,-2.5 8,7.5 V 618.9 H 566.3 l -6,4 -3,0 -6,-4 H 544.3 a 8,8 0 0,1 -8,-8 z" fill="#7C5385"/>
<path d="M 537.3,574.9 a 7,7 0 0,1 7,-7 H 551.8 l 5.5,3.7 3,0 5.5,-3.7 H 752.11" fill="none" stroke="#ab91b1" stroke-width="2"/>
<path d="M 537.3,574.9 V 610.9" fill="none" stroke="#ab91b1" stroke-width="2"/>
<text x="546.6" y="585.55" fill="#fff">call </text>
<rect x="577.66" y="572.5" width="80.37" height="16" rx="4" ry="4" fill="#fff" fill-opacity="0.6"/>
<text x="582.66" y="585.55" fill="#000">Notifier1</text>
<path d="M644.54,578.9 h5.8 l-2.9,4 z" fill="#7C5385"/>
<text x="663.04" y="585.55" fill="#fff">.ShowAlert</text>
<text x="695.2" y="611.55" fill="#fff">notice</text>
<path d="M 752.61,592.9 H 1136.37 V 617.9 H 752.61 V 612.9 c 0,-10 -8,8 -8,-7.5 s 8,2.5 8,-7.5 z" fill="#8f244b" transform="translate(1,1)"/>
<path d="M 752.61,592.9 H 1136.37 V 617.9 H 752.61 V 612.9 c 0,-10 -8,8 -8,-7.5 s 8,2.5 8,-7.5 z" fill="#B32D5E"/>
<path d="M 753.61,617.4 V 612.9 m -7.4,-12 q -1.2,4.8 1.2,9.6 M 753.61,597.9 V 593.9 H 1135.87" fill="none" stroke="#ce7998" stroke-width="2"/>
<text x="762.91" y="609.6" fill="#fff" style="font-size:13px">“</text>
<rect x="772.79" y="598.5" width="344" height="16" rx="4" ry="4" fill="#fff" fill-opacity="0.6"/>
<text x="777.79" y="611.55" fill="#000">Gabim! Nuk terheq dot me shume sesake ne llogari</text>
<text x="1121.59" y="609.6" fill="#fff" style="font-size:13px">”</text>
</g>
<rect x="1352.5" y="296" width="9" height="277" rx="4.5" fill="#c8c8c8"/>
<rect x="435" y="687.5" width="702" height="9.5" rx="4.7" fill="#c8c8c8"/>
<g stroke="#4d4646" stroke-width="2" stroke-linejoin="round" stroke-linecap="round">
<path d="M1283,212 q1,-5.5 6,-5.5 q5,0 6.5,6" fill="#fff" stroke-width="2.6"/>
<path d="M1309.5,220.3 Q1318,219.3 1320.6,227 Q1323.4,242 1323.2,258.500 Q1323.2,262.600 1319,262.600" fill="none" stroke="#555" stroke-width="4"/>
<path d="M1299,213.500 q9.5,3 13.500,13.500 q5,17 5.200,38 q0,3.500 -4.500,5 l-4,0.5z" fill="#4db6ac"/>
<path d="M1288,211.500 C1270,212.500 1261,228 1261,246 C1261,258 1263,266 1268,270.500 C1278,274.500 1303,274.500 1313,270 C1313,246 1309,222 1299,213.500 Q1294,211.500 1288,211.500z" fill="#4db6ac"/>
<path d="M1275,247.500 q12,-1.500 25,0 q4,0.500 3.500,4.500 l-1,9 q-0.500,3.500 -4,3.500 l-22,0 q-3.500,0 -4,-3.500 l-1,-9 q-0.500,-4 3.500,-4.500z M1272.500,253.500 h30" fill="#4db6ac" stroke-width="1.8"/>
</g>
<g fill="none" stroke="#777" stroke-width="1.8"><rect x="1301.500" y="427.500" width="21" height="20.500" rx="2"/><path d="M1306,450.500 v1.500 h21.500 v-21 h-2"/><path d="M1305.500,436.500 l4.500,4.500 8.500,-8.500" stroke-width="2.2"/></g>
<g fill="none" stroke="#777" stroke-width="1.6"><circle cx="1314.300" cy="492.300" r="11.200"/><path d="M1314.300,475.500 v6 M1314.300,503 v6 M1297.500,492.300 h6 M1325,492.300 h6"/></g><circle cx="1314.300" cy="492.300" r="4.200" fill="#777"/>
<g fill="none" stroke="#777" stroke-width="1.6"><circle cx="1314.300" cy="534.600" r="15.500"/><circle cx="1314.300" cy="568.700" r="15.500"/><path d="M1306.500,534.600 h15.600 M1314.300,526.800 v15.600 M1306.500,568.700 h15.600"/></g>
<g fill="#777"><path d="M1297,613.800 l2,-3.500 h15 l2,3.500z"/><rect x="1285" y="613.800" width="42" height="5.800"/><path d="M1288.600,622.800 h35.200 v38.300 a3.500,3.500 0 0,1 -3.500,3.500 h-28.200 a3.500,3.500 0 0,1 -3.500,-3.500z"/></g>
<path d="M258,604 L268,594.5 L278,604z" fill="#f2f2f2" stroke="#8a8a8a" stroke-width="1.1" stroke-linejoin="round"/>
<path d="M258,632 L268,641.5 L278,632z" fill="#f2f2f2" stroke="#8a8a8a" stroke-width="1.1" stroke-linejoin="round"/>
<path d="M325,604 L335,594.5 L345,604z" fill="#f2f2f2" stroke="#8a8a8a" stroke-width="1.1" stroke-linejoin="round"/>
<path d="M325,632 L335,641.5 L345,632z" fill="#f2f2f2" stroke="#8a8a8a" stroke-width="1.1" stroke-linejoin="round"/>
<path d="M266.500,610.300 L258.200,625 H274.800z" fill="#ffff9e" stroke="#cfcfcf" stroke-width="1" stroke-linejoin="round"/><path d="M266.500,614.500 v5.500 M266.500,621.500 v1.600" stroke="#9a9a8a" stroke-width="1.4"/>
<circle cx="331.200" cy="618.200" r="8" fill="#f26a6a" stroke="#999" stroke-width="1"/><path d="M327.200,614.200 l8,8 M335.200,614.200 l-8,8" stroke="#fff" stroke-width="2.400"/>
<rect x="242.800" y="645.200" width="120.400" height="19.800" fill="#efefef" stroke="#9c9c9c" stroke-width="1.6"/>
</g>
</svg>
<svg id="ui" width="1366" height="728" viewBox="0 0 1366 728">
<path d="M16.2,18.2 l3.9,3.9 3.9,-3.9" fill="none" stroke="#fff" stroke-width="1.8" stroke-linecap="round" stroke-linejoin="round"/>
<path d="M268.500,40 h250.500 a8.500,8.500 0 0,1 -8.500,-8.500 V15.500 a9.500,9.500 0 0,0 -9.500,-9.500 H287 a9.500,9.500 0 0,0 -9.500,9.500 V31.500 a8.500,8.500 0 0,1 -8.500,8.500 z" fill="#26403b"/>
<rect x="48.3" y="12" width="15.6" height="15.6" fill="#000"/><path d="M52.5,16.6 l7.8,-3.4 -2.2,7.4 -1.6,-2.4 -1.2,1.4 -0.2,-2.2z" fill="#f6e71d"/><text x="49.2" y="26" font-size="6.2" font-weight="bold" fill="#3fa6ea" textLength="13.6" lengthAdjust="spacingAndGlyphs">PhET</text><text x="51.9" y="26" font-size="6.2" font-weight="bold" fill="#f6e71d">h</text>
<text x="72.5" y="24.7" font-size="12.2" fill="#c9d9d5" textLength="128" lengthAdjust="spacingAndGlyphs">Filter - PhET Simulations</text>
<text x="310" y="24.7" font-size="12.2" fill="#e6efec" textLength="93" lengthAdjust="spacingAndGlyphs">MIT App Inventor</text>
<text x="548" y="24.7" font-size="12.2" fill="#c9d9d5" textLength="93" lengthAdjust="spacingAndGlyphs">MIT App Inventor</text>
<defs><linearGradient id="fade" x1="0" x2="1"><stop offset="0.85" stop-color="#c9d9d5"/><stop offset="1" stop-color="#c9d9d5" stop-opacity="0.1"/></linearGradient></defs>
<text x="786" y="24.7" font-size="12.2" fill="url(#fade)" textLength="166" lengthAdjust="spacingAndGlyphs">Top topics - MIT App Inventor C</text>
<path d="M252.4,16.599999999999998 L259.6,23.8 M259.6,16.599999999999998 L252.4,23.8" stroke="#c9d9d5" stroke-width="1.5" fill="none"/>
<path d="M490.4,16.599999999999998 L497.6,23.8 M497.6,16.599999999999998 L490.4,23.8" stroke="#eef4f2" stroke-width="1.5" fill="none"/>
<path d="M728.4,16.599999999999998 L735.6,23.8 M735.6,16.599999999999998 L728.4,23.8" stroke="#c9d9d5" stroke-width="1.5" fill="none"/>
<path d="M965.9,16.599999999999998 L973.1,23.8 M973.1,16.599999999999998 L965.9,23.8" stroke="#c9d9d5" stroke-width="1.5" fill="none"/>
<path d="M1000.5,20 h11 M1006,14.5 v11" stroke="#dbe7e3" stroke-width="1.6" fill="none"/>
<path d="M1246,19.5 h10" stroke="#fff" stroke-width="1.1"/>
<g fill="none" stroke="#fff" stroke-width="1.1"><rect x="1292.3" y="17.4" width="7.3" height="7.3" rx="1.4"/><path d="M1294.6,17.2 v-0.6 a1.4,1.4 0 0,1 1.4,-1.4 h4.4 a1.4,1.4 0 0,1 1.4,1.4 v4.6 a1.4,1.4 0 0,1 -1.4,1.4 h-0.6"/></g>
<path d="M1338.1,15.1 l9.8,10 M1347.9,15.1 l-9.8,10" stroke="#fff" stroke-width="1.2"/>
<rect x="286" y="12" width="16" height="16" fill="#fff"/><g transform="translate(274.085,-21.72) scale(0.39)"><path d="M32.1,93 l9.4,-4.900 9.500,4.900 v10.500 l-9.500,4.900 -9.400,-4.900z" fill="#8e2a8b"/><path d="M51,93 l9.400,-4.900 9.500,4.900 v10.500 l-9.500,4.900 -9.400,-4.900z" fill="#a5cf47"/><path d="M41.700,109 h18.600 v10.500 l-9.300,5 -9.300,-5z" fill="#f58a2c"/><path d="M41.700,110.300 q0,-8 9.300,-8 q9.300,0 9.300,8 z" fill="#fbf9f5"/><rect x="41.700" y="112" width="18.600" height="2.100" fill="#5a5a5a"/><rect x="41.700" y="116" width="18.600" height="2.100" fill="#5a5a5a"/><circle cx="48.600" cy="107.300" r="0.800" fill="#555"/><circle cx="53.300" cy="107.300" r="0.800" fill="#555"/><path d="M47,103.700 q-0.800,-2.800 -3.400,-3 M55,103.700 q0.800,-2.800 3.400,-3" stroke="#fbf9f5" stroke-width="1.400" fill="none" stroke-linecap="round"/><path d="M42.500,109.500 q-5,-5.500 -13.500,-3.800 M59.500,109.500 q5,-5.500 13.500,-3.800 M42.500,118.300 q-3,0.700 -5,3.400 M59.500,118.300 q3,0.700 5,3.400" stroke="#f58a2c" stroke-width="1.900" fill="none" stroke-linecap="round"/></g>
<g transform="translate(512.485,-22.02) scale(0.39)"><path d="M32.1,93 l9.4,-4.900 9.500,4.900 v10.500 l-9.500,4.900 -9.400,-4.900z" fill="#8e2a8b"/><path d="M51,93 l9.400,-4.900 9.500,4.900 v10.500 l-9.500,4.900 -9.400,-4.900z" fill="#a5cf47"/><path d="M41.700,109 h18.600 v10.500 l-9.300,5 -9.300,-5z" fill="#f58a2c"/><path d="M41.700,110.300 q0,-8 9.300,-8 q9.300,0 9.300,8 z" fill="#fbf9f5"/><rect x="41.700" y="112" width="18.600" height="2.100" fill="#5a5a5a"/><rect x="41.700" y="116" width="18.600" height="2.100" fill="#5a5a5a"/><circle cx="48.600" cy="107.300" r="0.800" fill="#555"/><circle cx="53.300" cy="107.300" r="0.800" fill="#555"/><path d="M47,103.700 q-0.800,-2.800 -3.400,-3 M55,103.700 q0.800,-2.800 3.400,-3" stroke="#fbf9f5" stroke-width="1.400" fill="none" stroke-linecap="round"/><path d="M42.500,109.500 q-5,-5.500 -13.500,-3.800 M59.500,109.500 q5,-5.500 13.500,-3.800 M42.500,118.300 q-3,0.700 -5,3.400 M59.500,118.300 q3,0.700 5,3.400" stroke="#f58a2c" stroke-width="1.900" fill="none" stroke-linecap="round"/></g>
<g transform="translate(750.485,-22.02) scale(0.39)"><path d="M32.1,93 l9.4,-4.900 9.500,4.900 v10.500 l-9.500,4.900 -9.400,-4.900z" fill="#8e2a8b"/><path d="M51,93 l9.400,-4.900 9.500,4.900 v10.500 l-9.500,4.900 -9.400,-4.900z" fill="#a5cf47"/><path d="M41.700,109 h18.600 v10.500 l-9.300,5 -9.300,-5z" fill="#f58a2c"/><path d="M41.700,110.300 q0,-8 9.300,-8 q9.300,0 9.300,8 z" fill="#fbf9f5"/><rect x="41.700" y="112" width="18.600" height="2.100" fill="#5a5a5a"/><rect x="41.700" y="116" width="18.600" height="2.100" fill="#5a5a5a"/><circle cx="48.600" cy="107.300" r="0.800" fill="#555"/><circle cx="53.300" cy="107.300" r="0.800" fill="#555"/><path d="M47,103.700 q-0.800,-2.800 -3.400,-3 M55,103.700 q0.800,-2.800 3.400,-3" stroke="#fbf9f5" stroke-width="1.400" fill="none" stroke-linecap="round"/><path d="M42.500,109.500 q-5,-5.500 -13.500,-3.800 M59.500,109.500 q5,-5.500 13.500,-3.800 M42.500,118.300 q-3,0.700 -5,3.400 M59.500,118.300 q3,0.700 5,3.400" stroke="#f58a2c" stroke-width="1.900" fill="none" stroke-linecap="round"/></g>
<path d="M27.6,63.1 H16.6 M21.9,57.6 l-5.500,5.500 5.500,5.500" fill="none" stroke="#bfd4ce" stroke-width="1.700" stroke-linejoin="round" stroke-linecap="round"/>
<path d="M52.4,63.1 H63.4 M58.1,57.600 l5.500,5.500 -5.500,5.500" fill="none" stroke="#65827c" stroke-width="1.700" stroke-linejoin="round" stroke-linecap="round"/>
<path d="M99.300,60.200 a5.600,5.600 0 1,0 0.300,5.400 M99.900,57.600 v3.600 h-3.600" fill="none" stroke="#bfd4ce" stroke-width="1.700" stroke-linecap="round" stroke-linejoin="round"/>
<g fill="none" stroke="#e0ebe8" stroke-width="1.400"><path d="M136.300,59.700 h6.300 M131.300,66.400 h6.300"/><circle cx="133.300" cy="59.700" r="1.700"/><circle cx="140.600" cy="66.400" r="1.700"/></g>
<text x="157.3" y="67.7" font-size="14" fill="#fff" textLength="280" lengthAdjust="spacingAndGlyphs">ai2.appinventor.mit.edu/#4854793259515904</text>
<path d="M1204,56.300 l2.100,4.600 5,0.500 -3.800,3.400 1.100,5 -4.400,-2.600 -4.400,2.600 1.100,-5 -3.800,-3.400 5,-0.500z" fill="none" stroke="#bfd4ce" stroke-width="1.500" stroke-linejoin="round"/>
<path d="M1248.200,57.300 h4.200 a2.100,2.100 0 0,1 4.200,0 h4.200 v4.200 a2.100,2.100 0 0,1 0,4.200 v3.600 h-12.600 v-3.700 a2.100,2.100 0 0,0 0,-4.200 z" fill="none" stroke="#bfd4ce" stroke-width="1.600" stroke-linejoin="round"/>
<text x="1308.1" y="67" font-size="10.8" fill="#fff" font-weight="bold" text-anchor="middle">E</text>
<g fill="#bfd4ce"><circle cx="1344.100" cy="57.800" r="1.500"/><circle cx="1344.100" cy="63.100" r="1.500"/><circle cx="1344.100" cy="68.400" r="1.500"/></g>
<g><path d="M32.1,93 l9.4,-4.900 9.500,4.900 v10.500 l-9.500,4.900 -9.400,-4.900z" fill="#8e2a8b"/><path d="M51,93 l9.400,-4.900 9.500,4.900 v10.500 l-9.500,4.900 -9.400,-4.900z" fill="#a5cf47"/><path d="M41.700,109 h18.600 v10.500 l-9.300,5 -9.300,-5z" fill="#f58a2c"/><path d="M41.700,110.300 q0,-8 9.300,-8 q9.300,0 9.300,8 z" fill="#fbf9f5"/><rect x="41.700" y="112" width="18.600" height="2.100" fill="#5a5a5a"/><rect x="41.700" y="116" width="18.600" height="2.100" fill="#5a5a5a"/><circle cx="48.600" cy="107.300" r="0.800" fill="#555"/><circle cx="53.300" cy="107.300" r="0.800" fill="#555"/><path d="M47,103.700 q-0.800,-2.800 -3.400,-3 M55,103.700 q0.800,-2.800 3.400,-3" stroke="#fbf9f5" stroke-width="1.400" fill="none" stroke-linecap="round"/><path d="M42.500,109.500 q-5,-5.500 -13.500,-3.800 M59.500,109.500 q5,-5.500 13.500,-3.800 M42.500,118.300 q-3,0.700 -5,3.400 M59.500,118.300 q3,0.700 5,3.400" stroke="#f58a2c" stroke-width="1.900" fill="none" stroke-linecap="round"/></g>
<text x="79.3" y="107.6" font-size="21.5" fill="#f58a2c" textLength="36.5" lengthAdjust="spacingAndGlyphs" font-weight="bold" stroke="#f58a2c" stroke-width="0.7">MIT</text>
<text x="79.3" y="119.3" font-size="10.2" font-weight="bold" fill="#555" textLength="69.3" lengthAdjust="spacingAndGlyphs">APP INVENTOR</text>
<text x="492" y="117.7" font-size="14.8" fill="#444" textLength="54.2" lengthAdjust="spacingAndGlyphs">Projects</text>
<path d="M554.6,111.2 h5.2 l-2.6,3.9z" fill="#333"/>
<text x="610.6" y="117.7" font-size="14.8" fill="#444" textLength="58.5" lengthAdjust="spacingAndGlyphs">Connect</text>
<path d="M676.3,111.2 h5.2 l-2.6,3.9z" fill="#333"/>
<text x="733.8" y="117.7" font-size="14.8" fill="#444" textLength="33" lengthAdjust="spacingAndGlyphs">Build</text>
<path d="M774.4,111.2 h5.2 l-2.6,3.9z" fill="#333"/>
<text x="831.6" y="117.7" font-size="14.8" fill="#444" textLength="56" lengthAdjust="spacingAndGlyphs">Settings</text>
<path d="M893.9,111.2 h5.2 l-2.6,3.9z" fill="#333"/>
<text x="956.6" y="117.7" font-size="14.8" fill="#444" textLength="30.2" lengthAdjust="spacingAndGlyphs">Help</text>
<path d="M993.9,111.2 h5.2 l-2.6,3.9z" fill="#333"/>
<text x="1051.7" y="117.7" font-size="14.8" fill="#444" textLength="47.6" lengthAdjust="spacingAndGlyphs">English</text>
<path d="M1106.9,111.2 h5.2 l-2.6,3.9z" fill="#333"/>
<text x="1163.6" y="117.7" font-size="14.8" fill="#444" textLength="155.5" lengthAdjust="spacingAndGlyphs">erlionhysi@gmail.com</text>
<path d="M1326.4,111.2 h5.2 l-2.6,3.9z" fill="#333"/>
<g fill="#3a3a3a"><rect x="469.7" y="105.9" width="17.6" height="4.6" rx="0.6"/><path d="M470.6,111.5 h15.8 v10.4 a1,1 0 0,1 -1,1 h-13.8 a1,1 0 0,1 -1,-1z M475.5,114.4 v2.6 h6 v-2.6z" fill-rule="evenodd"/></g>
<g><rect x="593.1" y="111.2" width="7.5" height="12.6" rx="1" fill="#3a3a3a"/><rect x="595.9" y="113.3" width="1.9" height="2.2" fill="#fff"/><path d="M592.3,109.6 a6.2,6.2 0 0,1 9.100,0 M590.2,107.500 a9.300,9.300 0 0,1 13.300,0" fill="none" stroke="#3a3a3a" stroke-width="1.500"/></g>
<g><rect x="713.4" y="104.8" width="12.3" height="19.1" rx="1.2" fill="#3a3a3a"/><rect x="714.7" y="107.6" width="9.7" height="13" fill="#fff"/><path d="M719.550,109.800 v7 M716.600,114 l2.950,3 2.950,-3" stroke="#3a3a3a" stroke-width="1.400" fill="none"/></g>
<path d="M815.71,108.29 L816.03,106.25 L819.17,106.25 L819.49,108.29 L821.95,109.70 L823.87,108.97 L825.44,111.68 L823.84,112.98 L823.84,115.82 L825.44,117.12 L823.87,119.83 L821.95,119.10 L819.49,120.51 L819.17,122.55 L816.03,122.55 L815.71,120.51 L813.25,119.10 L811.33,119.83 L809.76,117.12 L811.36,115.82 L811.36,112.98 L809.76,111.68 L811.33,108.97 L813.25,109.70z" fill="#3a3a3a" stroke="#3a3a3a" stroke-width="1.2" stroke-linejoin="round"/><circle cx="817.6" cy="114.4" r="3.3" fill="#f7f7f7"/>
<circle cx="942.3" cy="114.4" r="8.5" fill="#3a3a3a"/>
<text x="942.3" y="119" font-size="12.8" fill="#fff" font-weight="bold" text-anchor="middle">?</text>
<g fill="none" stroke="#333" stroke-width="1.3"><circle cx="1037.4" cy="114.4" r="7.8"/><ellipse cx="1037.4" cy="114.4" rx="3.6" ry="7.8"/><path d="M1029.6,114.4 h15.6 M1030.7,110.4 h13.4 M1030.7,118.4 h13.4"/></g>
<path d="M1150,107.5 h-7 v14 h7 M1146.5,114.5 h10 M1153,111 l3.5,3.5 -3.5,3.5" fill="none" stroke="#333" stroke-width="1.5"/>
<path d="M44.5,158.5 H30.5 M36.5,152.5 l-6,6 6,6" fill="none" stroke="#444" stroke-width="1.5"/>
<text x="70" y="164.9" font-size="19.3" fill="#000" textLength="95" lengthAdjust="spacingAndGlyphs" stroke="#000" stroke-width="0.45">bankomat</text>
<text x="513" y="165.5" font-size="18" fill="#000" textLength="76" lengthAdjust="spacingAndGlyphs" stroke="#000" stroke-width="0.45">Screens:</text>
<text x="621.3" y="163" font-size="14.6" fill="#3a3a3a" textLength="42.4" lengthAdjust="spacingAndGlyphs">Terhiq</text>
<path d="M671.4,156.8 h5.2 l-2.6,3.9z" fill="#333"/>
<path d="M704.5,158.5 h13 M711,152 v13 M750.5,158.5 h13" stroke="#333" stroke-width="1.4"/>
<path d="M812.97,152.98 L812.97,154.02 L811.78,154.25 L811.50,154.94 L812.17,155.94 L811.44,156.67 L810.44,156.00 L809.75,156.28 L809.52,157.47 L808.48,157.47 L808.25,156.28 L807.56,156.00 L806.56,156.67 L805.83,155.94 L806.50,154.94 L806.22,154.25 L805.03,154.02 L805.03,152.98 L806.22,152.75 L806.50,152.06 L805.83,151.06 L806.56,150.33 L807.56,151.00 L808.25,150.72 L808.48,149.53 L809.52,149.53 L809.75,150.72 L810.44,151.00 L811.44,150.33 L812.17,151.06 L811.50,152.06 L811.78,152.75z" fill="#333"/><circle cx="809" cy="153.5" r="1.6" fill="#fff"/>
<path d="M822.95,161.22 L822.95,162.78 L821.17,163.12 L820.74,164.16 L821.76,165.66 L820.66,166.76 L819.16,165.74 L818.12,166.17 L817.78,167.95 L816.22,167.95 L815.88,166.17 L814.84,165.74 L813.34,166.76 L812.24,165.66 L813.26,164.16 L812.83,163.12 L811.05,162.78 L811.05,161.22 L812.83,160.88 L813.26,159.84 L812.24,158.34 L813.34,157.24 L814.84,158.26 L815.88,157.83 L816.22,156.05 L817.78,156.05 L818.12,157.83 L819.16,158.26 L820.66,157.24 L821.76,158.34 L820.74,159.84 L821.17,160.88z" fill="#333"/><circle cx="817" cy="162" r="2.6" fill="#fff"/>
<circle cx="859" cy="158.5" r="8" fill="#333"/><path d="M853.5,154 q2.5,-1.5 4,0.5 q0.5,2.5 -1.5,3.5 q-1,2 1.5,3 q1,1.5 -0.5,4 q-2,-1 -2,-3.5 q-2.5,-1.5 -3,-3.5z M861,151.5 q3.5,0.5 5.5,4 l-1,5 q-2,1 -2.5,-1.5 q-2.5,-0.5 -1.5,-3 q1.5,-1.5 -0.5,-2.5z" fill="#fff"/>
<g fill="#444"><rect x="1165" y="151.5" width="11.7" height="14"/><rect x="1179.2" y="151.5" width="3.8" height="3.6"/><rect x="1179.2" y="156.7" width="3.8" height="3.6"/><rect x="1179.2" y="161.9" width="3.8" height="3.6"/></g>
<text x="1208.5" y="162.9" font-size="15.3" fill="#444" textLength="60.5" lengthAdjust="spacingAndGlyphs" stroke="#444" stroke-width="0.3">Designer</text>
<text x="1290.5" y="162.9" font-size="15.3" fill="#9aa38c" textLength="44" lengthAdjust="spacingAndGlyphs">Blocks</text>
<path d="M188.0,193.8 h9 l-4.5,-4.8z" fill="#8b8b8b"/>
<path d="M210.0,193.8 h9 l-4.5,-4.8z" fill="#8b8b8b"/>
<path d="M188.2,636.2 h9 l-4.5,4.8z" fill="#8b8b8b"/>
<path d="M209.9,688.4 h9 l-4.5,4.8z" fill="#8b8b8b"/>
<path d="M9.8,650.9 v9 l-4.8,-4.5z" fill="#8b8b8b"/>
<path d="M174.0,650.9 v9 l4.8,-4.5z" fill="#8b8b8b"/>
<rect x="7.6" y="195.6" width="7.8" height="7.6" rx="1.8" fill="#f4f4fb" stroke="#4a4ab0" stroke-width="1.2"/><path d="M9.5,199.4 h4" stroke="#1010c0" stroke-width="1.3"/>
<rect x="7.8" y="575.9" width="7.8" height="7.6" rx="1.8" fill="#f4f4fb" stroke="#4a4ab0" stroke-width="1.2"/><path d="M9.7,579.6999999999999 h4" stroke="#1010c0" stroke-width="1.3"/>
<rect x="23.6" y="613.8000000000001" width="7.8" height="7.6" rx="1.8" fill="#f4f4fb" stroke="#4a4ab0" stroke-width="1.2"/><path d="M25.5,617.6 h4" stroke="#1010c0" stroke-width="1.3"/>
<text x="27.3" y="206.7" font-size="15" fill="#444" textLength="49" lengthAdjust="spacingAndGlyphs">Built-in</text>
<rect x="46.9" y="228.95" width="16.4" height="16.4" fill="#d4ad46" stroke="#2b2b2b" stroke-width="1.3"/>
<text x="67.4" y="246.8" font-size="15" fill="#444" textLength="50.5" lengthAdjust="spacingAndGlyphs">Control</text>
<rect x="46.9" y="266.95" width="16.4" height="16.4" fill="#8cba51" stroke="#2b2b2b" stroke-width="1.3"/>
<text x="67.4" y="284.8" font-size="15" fill="#444" textLength="35.8" lengthAdjust="spacingAndGlyphs">Logic</text>
<rect x="46.9" y="304.95" width="16.4" height="16.4" fill="#4d84c4" stroke="#2b2b2b" stroke-width="1.3"/>
<text x="67.4" y="322.8" font-size="15" fill="#444" textLength="34.6" lengthAdjust="spacingAndGlyphs">Math</text>
<rect x="46.9" y="342.95" width="16.4" height="16.4" fill="#c93d6d" stroke="#2b2b2b" stroke-width="1.3"/>
<text x="67.4" y="360.8" font-size="15" fill="#444" textLength="27.7" lengthAdjust="spacingAndGlyphs">Text</text>
<rect x="46.9" y="380.95" width="16.4" height="16.4" fill="#52b5dc" stroke="#2b2b2b" stroke-width="1.3"/>
<text x="67.4" y="398.8" font-size="15" fill="#444" textLength="28.8" lengthAdjust="spacingAndGlyphs">Lists</text>
<rect x="46.9" y="418.95" width="16.4" height="16.4" fill="#2d1799" stroke="#2b2b2b" stroke-width="1.3"/>
<text x="67.4" y="436.8" font-size="15" fill="#444" textLength="82" lengthAdjust="spacingAndGlyphs">Dictionaries</text>
<rect x="46.9" y="456.95" width="16.4" height="16.4" fill="#8c8c8c" stroke="#2b2b2b" stroke-width="1.3"/>
<text x="67.4" y="474.8" font-size="15" fill="#444" textLength="44.2" lengthAdjust="spacingAndGlyphs">Colors</text>
<rect x="46.9" y="494.95" width="16.4" height="16.4" fill="#e07339" stroke="#2b2b2b" stroke-width="1.3"/>
<text x="67.4" y="512.8" font-size="15" fill="#444" textLength="65.4" lengthAdjust="spacingAndGlyphs">Variables</text>
<rect x="46.9" y="532.95" width="16.4" height="16.4" fill="#8c5f96" stroke="#2b2b2b" stroke-width="1.3"/>
<text x="67.4" y="550.8" font-size="15" fill="#444" textLength="78.8" lengthAdjust="spacingAndGlyphs">Procedures</text>
<rect x="31.8" y="569.3" width="14.4" height="19.4" rx="2.5" fill="#e4e4e4" stroke="#d0d0d0" stroke-width="0.6"/><path d="M31.8,573.5 v-1.7 a2.5,2.5 0 0,1 2.5,-2.5 h9.4 a2.5,2.5 0 0,1 2.5,2.5 v1.7z" fill="#a5cf47"/>
<text x="51.5" y="588.8" font-size="15" fill="#444" textLength="42.7" lengthAdjust="spacingAndGlyphs">Terhiq</text>
<g fill="#fff" stroke="#000" stroke-width="1.3"><rect x="47.8" y="610.3" width="14" height="5.4" rx="1.6"/><rect x="47.8" y="618.2" width="14" height="5.4" rx="1.6"/></g>
<clipPath id="tclip"><rect x="0" y="183" width="185" height="464.5"/></clipPath>
<g clip-path="url(#tclip)"><text x="67" y="626.3" font-size="15" fill="#444" textLength="152.5" lengthAdjust="spacingAndGlyphs">VerticalArrangement1</text><rect x="63" y="646.6" width="16" height="6" rx="1.6" fill="#fff" stroke="#000" stroke-width="1.3"/></g>
<text x="39.4" y="686" font-size="15" fill="#9aa38c" textLength="54.3" lengthAdjust="spacingAndGlyphs">Rename</text>
<text x="120.2" y="686" font-size="15" fill="#9aa38c" textLength="41" lengthAdjust="spacingAndGlyphs">Delete</text>
<text x="278.3" y="624" font-size="14" fill="#555">0</text>
<text x="343.5" y="624" font-size="14" fill="#555">0</text>
<text x="251.8" y="659.5" font-size="14.5" fill="#555" textLength="102.6" lengthAdjust="spacingAndGlyphs">Show Warnings</text>
<text x="589" y="717.8" font-size="12.5" fill="#777" textLength="188" lengthAdjust="spacingAndGlyphs">Privacy Policy and Terms of Use</text>
</svg>
</body></html>
